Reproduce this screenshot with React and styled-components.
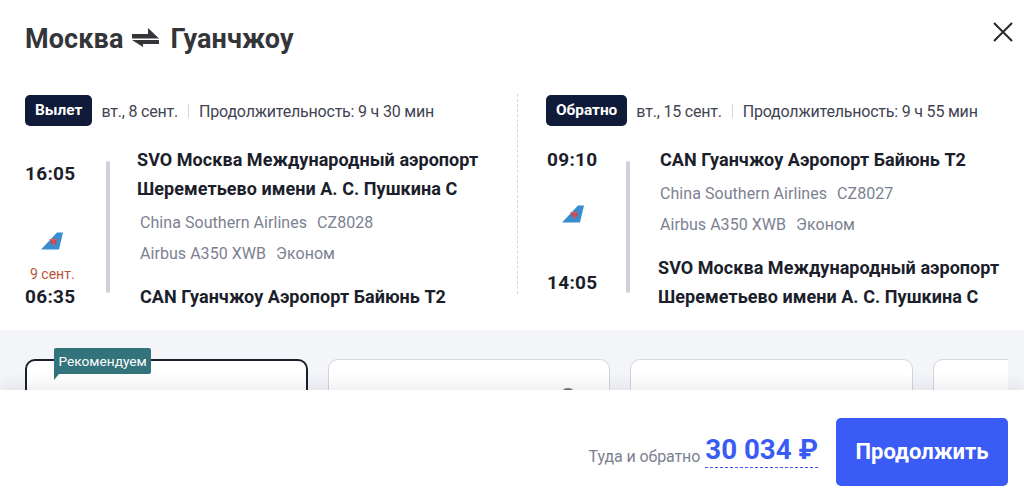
import React from 'react';
import styled, { createGlobalStyle } from 'styled-components';

const GlobalStyles = createGlobalStyle`
  html, body { margin: 0; padding: 0; background: #fff; }
  body { font-family: Roboto, "Noto Sans", sans-serif; }
`;

const Modal = styled.div`
  width: 1024px;
  height: 499px;
  display: flex;
  flex-direction: column;
  overflow: hidden;
  background: #fff;
`;

const Top = styled.div`
  height: 330px;
  flex: none;
  padding-left: 25px;
  box-sizing: border-box;
`;

const Header = styled.div`
  height: 94px;
  display: flex;
  align-items: flex-start;
  justify-content: space-between;
  padding: 22px 11px 0 0;
  box-sizing: border-box;
`;

const Title = styled.h1`
  margin: 0;
  display: flex;
  align-items: center;
  gap: 9px;
  height: 34px;
  font-size: 27px;
  font-weight: 700;
  letter-spacing: 0.1px;
  color: #333538;
`;

const CloseButton = styled.button`
  width: 20px;
  height: 20px;
  padding: 0;
  border: 0;
  background: none;
  display: block;
`;

const Routes = styled.div`
  display: grid;
  grid-template-columns: 492px 1fr;
`;

const Route = styled.section`
  height: 200px;
  box-sizing: border-box;
  ${(p) => p.$back && `
    border-left: 1px dashed #d4d6de;
    padding-left: 28px;
  `}
`;

const RouteHead = styled.div`
  display: flex;
  align-items: center;
  height: 31px;
  margin-top: 1px;
  font-size: 16px;
  letter-spacing: -0.2px;
  color: #3f4452;
`;

const HeadText = styled.span`
  padding-top: 1px;
`;

const Badge = styled.span`
  height: 31px;
  line-height: 31px;
  padding: 0 10px;
  border-radius: 5px;
  background: #0f1b38;
  color: #fff;
  font-size: 15.4px;
  font-weight: 700;
  letter-spacing: 0;
  margin-right: 9px;
`;

const Separator = styled.span`
  width: 1px;
  height: 14px;
  background: #d4d6de;
  margin: 0 10px;
`;

const Flight = styled.div`
  display: grid;
  grid-template-columns: ${(p) => (p.$back ? '80px 4px 1fr' : '81px 4px 1fr')};
  margin-top: 19px;
`;

const TimeCol = styled.div`
  display: flex;
  flex-direction: column;
  padding-top: ${(p) => p.$top}px;
`;

const Time = styled.div`
  font-size: 19px;
  line-height: 24px;
  font-weight: 700;
  letter-spacing: 0.3px;
  color: #1b1e2b;
  margin-top: ${(p) => p.$gap || 0}px;
  ${(p) => p.$back && 'padding-left: 1px;'}
`;

const TailWrap = styled.div`
  margin-top: ${(p) => p.$gap}px;
  margin-left: ${(p) => p.$left}px;
  height: 18px;
`;

const NextDay = styled.div`
  font-size: 14px;
  line-height: 16px;
  color: #b8553a;
  margin: 16px 0 3px 5px;
`;

const Bar = styled.div`
  width: 4px;
  height: 132px;
  margin-top: 16px;
  border-radius: 2px;
  background: #ced1dc;
`;

const Info = styled.div`
  padding-left: ${(p) => p.$left}px;
`;

const Airport = styled.div`
  font-size: 18px;
  line-height: 29px;
  font-weight: 700;
  letter-spacing: 0.05px;
  color: #1b1e2b;
  white-space: nowrap;
  margin-top: ${(p) => p.$gap || 0}px;
  padding-left: ${(p) => p.$indent || 0}px;
`;

const Carrier = styled.div`
  font-size: 16px;
  line-height: 31px;
  letter-spacing: 0.05px;
  color: #7c8191;
  white-space: nowrap;
  padding-left: ${(p) => p.$indent}px;
  margin-top: ${(p) => p.$gap || 0}px;
  span + span { margin-left: 10px; }
`;

const Tariffs = styled.div`
  flex: 1;
  min-height: 0;
  background: #f4f5f9;
  padding: 0 16px 0 25px;
`;

const TariffRow = styled.div`
  display: flex;
  gap: 20px;
  overflow: hidden;
  padding-top: 29px;
`;

const TariffCard = styled.div`
  position: relative;
  flex: none;
  width: 282.5px;
  height: 120px;
  box-sizing: border-box;
  border-radius: 10px;
  background: #fff;
  border: ${(p) => (p.$active ? '2px solid #1b1e2b' : '1px solid #d3d5dc')};
`;

const RecommendTag = styled.span`
  position: absolute;
  left: 27px;
  top: -13px;
  height: 26px;
  line-height: 26px;
  padding: 0 4.5px;
  border-radius: 2px 2px 2px 0;
  background: #33737c;
  color: #fff;
  font-size: 13.7px;
  white-space: nowrap;
  &::after {
    content: '';
    position: absolute;
    left: 0;
    top: 26px;
    border-top: 6px solid #33737c;
    border-left: 5px solid transparent;
    transform: scaleX(-1);
  }
`;

const InfoDot = styled.span`
  position: absolute;
  right: 33px;
  top: 28px;
  width: 16px;
  height: 16px;
  border-radius: 50%;
  background: #6f7480;
`;

const Footer = styled.footer`
  position: relative;
  height: 109px;
  flex: none;
  display: flex;
  align-items: center;
  justify-content: flex-end;
  padding: 14px 16px 0 0;
  box-sizing: border-box;
  background: #fff;
  box-shadow: 0 -6px 14px rgba(30, 35, 60, 0.07);
`;

const PriceLabel = styled.span`
  font-size: 16px;
  letter-spacing: -0.1px;
  color: #7c8191;
  margin: 10px 5px 0 0;
`;

const Price = styled.span`
  font-size: 27.7px;
  line-height: 34px;
  font-weight: 700;
  color: #3a5bf5;
  border-bottom: 1px dashed #3a5bf5;
  margin: -2px 18px 0 0;
`;

const ContinueButton = styled.button`
  width: 172px;
  height: 68px;
  border: 0;
  border-radius: 5px;
  background: #3a5bf5;
  color: #fff;
  font-family: inherit;
  font-size: 22px;
  font-weight: 700;
`;

const SwapIcon = () => (
  <svg width="29" height="22" viewBox="0 0 29 22" fill="#333538">
    <path d="M0 6h16V0l11 10.5H0z" />
    <path d="M27 12H0l11 7v-3h16z" />
  </svg>
);

const CloseIcon = () => (
  <svg width="20" height="20" viewBox="0 0 20 20" fill="none" stroke="#26282e" strokeWidth="2">
    <path d="M1 1l18 18M19 1L1 19" />
  </svg>
);

const AirlineTail = () => (
  <svg width="22" height="18" viewBox="0 0 22 18">
    <path d="M0 17.5L16 .5h6L18 17.5z" fill="#3a8ed0" />
    <circle cx="12.5" cy="9.5" r="3" fill="#c8444f" />
    <path d="M8.5 7.5h8M12.5 7v7" stroke="#d0606a" strokeWidth="1.2" />
  </svg>
);

const airportSvo = ['SVO Москва Международный аэропорт', 'Шереметьево имени А. С. Пушкина C'];

export default function App() {
  return (
    <Modal>
      <GlobalStyles />
      <Top>
        <Header>
          <Title>
            Москва <SwapIcon /> Гуанчжоу
          </Title>
          <CloseButton aria-label="Закрыть">
            <CloseIcon />
          </CloseButton>
        </Header>
        <Routes>
          <Route>
            <RouteHead>
              <Badge>Вылет</Badge>
              <HeadText>вт., 8 сент.</HeadText>
              <Separator />
              <HeadText>Продолжительность: 9 ч 30 мин</HeadText>
            </RouteHead>
            <Flight>
              <TimeCol $top={17}>
                <Time>16:05</Time>
                <TailWrap $gap={46} $left={16}>
                  <AirlineTail />
                </TailWrap>
                <NextDay>9 сент.</NextDay>
                <Time>06:35</Time>
              </TimeCol>
              <Bar />
              <Info $left={27}>
                {airportSvo.map((line) => (
                  <Airport key={line}>{line}</Airport>
                ))}
                <Carrier $indent={3} $gap={4}>
                  <span>China Southern Airlines</span>
                  <span>CZ8028</span>
                </Carrier>
                <Carrier $indent={3}>
                  <span>Airbus A350 XWB</span>
                  <span>Эконом</span>
                </Carrier>
                <Airport $indent={3} $gap={13}>CAN Гуанчжоу Аэропорт Байюнь T2</Airport>
              </Info>
            </Flight>
          </Route>
          <Route $back>
            <RouteHead>
              <Badge>Обратно</Badge>
              <HeadText>вт., 15 сент.</HeadText>
              <Separator />
              <HeadText>Продолжительность: 9 ч 55 мин</HeadText>
            </RouteHead>
            <Flight $back>
              <TimeCol $top={3}>
                <Time $back>09:10</Time>
                <TailWrap $gap={33} $left={16}>
                  <AirlineTail />
                </TailWrap>
                <Time $back $gap={48}>14:05</Time>
              </TimeCol>
              <Bar />
              <Info $left={28}>
                <Airport $indent={2}>CAN Гуанчжоу Аэропорт Байюнь T2</Airport>
                <Carrier $indent={2} $gap={4}>
                  <span>China Southern Airlines</span>
                  <span>CZ8027</span>
                </Carrier>
                <Carrier $indent={2}>
                  <span>Airbus A350 XWB</span>
                  <span>Эконом</span>
                </Carrier>
                {airportSvo.map((line, i) => (
                  <Airport key={line} $gap={i === 0 ? 13 : 0}>{line}</Airport>
                ))}
              </Info>
            </Flight>
          </Route>
        </Routes>
      </Top>
      <Tariffs>
        <TariffRow>
          <TariffCard $active>
            <RecommendTag>Рекомендуем</RecommendTag>
          </TariffCard>
          <TariffCard>
            <InfoDot />
          </TariffCard>
          <TariffCard />
          <TariffCard />
        </TariffRow>
      </Tariffs>
      <Footer>
        <PriceLabel>Туда и обратно</PriceLabel>
        <Price>30 034 ₽</Price>
        <ContinueButton>Продолжить</ContinueButton>
      </Footer>
    </Modal>
  );
}
